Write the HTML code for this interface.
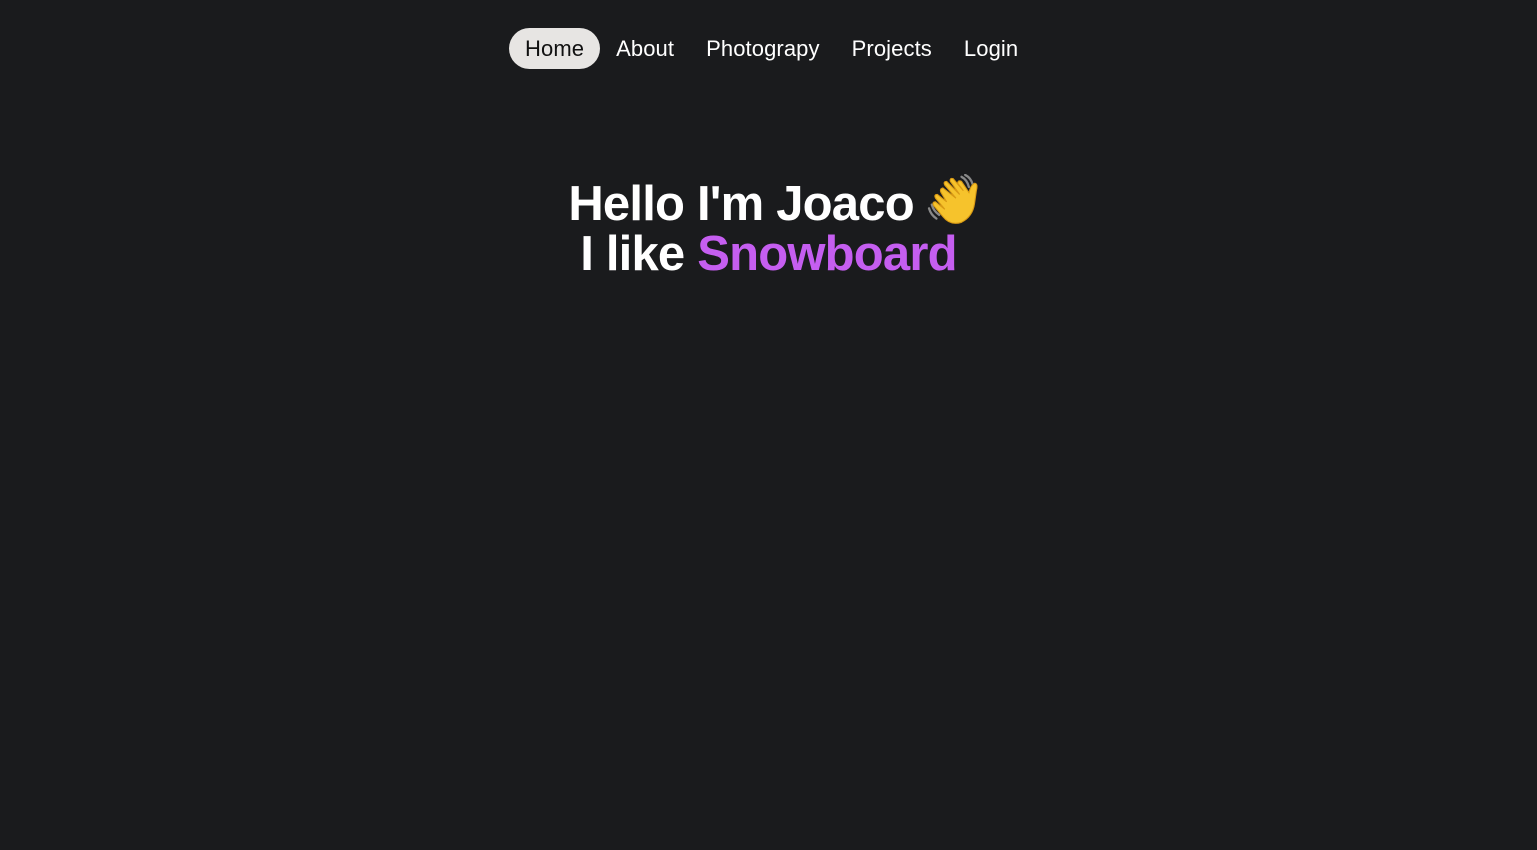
<!DOCTYPE html>
<html><head><meta charset="utf-8"><style>
html,body{margin:0;padding:0;background:#1a1b1d;width:1537px;height:850px;overflow:hidden;font-family:"Liberation Sans",Arial,sans-serif;color:#fff}
nav{position:absolute;top:28px;left:509px;display:flex;height:41px;align-items:center}
nav a{display:block;padding:0 16px;font-size:22px;line-height:41px;color:#fff;text-decoration:none;letter-spacing:0.1px}
nav a.act{background:#e7e5e3;color:#111;border-radius:21px}
h1{position:absolute;top:174px;left:0;width:1537px;margin:0;text-align:center;font-size:49px;line-height:50px;font-weight:bold;letter-spacing:-0.8px}
.l1{position:relative;left:7px}
.p{color:#c55ef0}
svg{vertical-align:-6px}
</style></head><body>
<nav><a class="act">Home</a><a>About</a><a>Photograpy</a><a>Projects</a><a>Login</a></nav>
<h1><span class="l1">Hello I'm Joaco <svg width="56" height="52" viewBox="2 2 58 56"><g fill="none" stroke="#888" stroke-width="2.5" stroke-linecap="round"><path d="M38 5 Q44 8 46 16"/><path d="M42 3 Q48 6 50 13"/><path d="M6 35 Q8 42 14 46"/><path d="M3 39 Q5 46 11 50"/></g><path d="M16 22 Q14 18 18 17 L32 28 L20 14 Q18 10 22 10 L36 24 L26 10 Q25 6 29 7 L40 20 L34 12 Q34 8 38 10 L46 22 Q48 14 52 12 Q56 12 54 20 L52 34 Q50 48 38 54 Q26 58 18 48 L8 36 Q6 32 10 32 L20 40 L10 28 Q8 24 12 24 L22 32 Z" fill="#f6c32c" stroke="#d99a14" stroke-width="1.2"/></svg></span><br>I like <span class="p">Snowboard</span></h1>
</body></html>
